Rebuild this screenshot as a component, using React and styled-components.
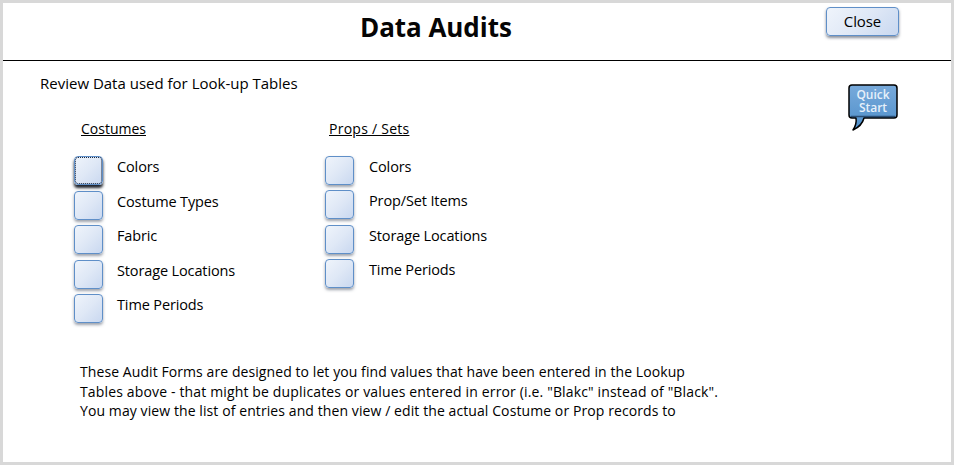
import React from "react";
import styled, { createGlobalStyle } from "styled-components";

const Global = createGlobalStyle`
  html, body { margin: 0; padding: 0; background: #fff; }
  body { width: 954px; height: 465px; overflow: hidden; font-family: "Open Sans", "Noto Sans", sans-serif; color: #000; }
  * { box-sizing: border-box; }
`;

const Frame = styled.div`
  width: 954px;
  height: 465px;
  border-style: solid;
  border-color: #d8d8d8;
  border-width: 3px;
  background: #fff;
  display: flex;
  flex-direction: column;
`;

const Header = styled.header`
  flex: none;
  height: 58px;
  border-bottom: 1px solid #000;
  display: flex;
  align-items: flex-start;
  padding: 4px 52px 0 357px;
`;

const Title = styled.h1`
  margin: 0;
  font-size: 26px;
  line-height: 40px;
  font-weight: 700;
  letter-spacing: -0.05px;
  color: #050505;
`;

const blueFace = `
  background: linear-gradient(135deg, #eff4fb 0%, #dfe8f6 50%, #c9d8f0 100%);
`;

const CloseButton = styled.button`
  margin-left: auto;
  width: 73px;
  height: 29px;
  padding: 0 0 1px;
  border: 1px solid #5f8fc8;
  border-radius: 4px;
  ${blueFace}
  box-shadow: 0 2px 3px rgba(60, 70, 90, 0.6);
  font-family: inherit;
  font-size: 15px;
  letter-spacing: -0.1px;
  color: #000;
`;

const Body = styled.main`
  flex: 1;
  display: flex;
  justify-content: space-between;
  align-items: flex-start;
  padding: 0 52px 0 37px;
`;

const Left = styled.div`
  display: flex;
  flex-direction: column;
`;

const Intro = styled.p`
  margin: 12px 0 0;
  font-size: 15px;
  line-height: 21px;
`;

const Columns = styled.div`
  display: flex;
  margin: 25px 0 0 34px;
`;

const Column = styled.section`
  width: ${(p) => p.$width}px;
  display: flex;
  flex-direction: column;
`;

const Heading = styled.h2`
  margin: 0 0 17px ${(p) => p.$indent}px;
  font-size: 14px;
  line-height: 20px;
  font-weight: 500;
  letter-spacing: ${(p) => p.$spacing}px;
  text-decoration: underline;
`;

const RowList = styled.div`
  display: flex;
  flex-direction: column;
  gap: ${(p) => p.$gap}px;
`;

const Row = styled.div`
  display: flex;
  align-items: flex-start;
  height: 29px;
`;

const Square = styled.button`
  flex: none;
  width: 29px;
  height: 29px;
  padding: 0;
  margin-right: ${(p) => p.$labelGap}px;
  border: 1px solid #5f8fc8;
  border-radius: 4px;
  ${blueFace}
  box-shadow: ${(p) =>
    p.$focused ? "0 3px 3px rgba(15, 20, 30, 0.95)" : "0 2px 3px rgba(60, 70, 90, 0.5)"};
  outline: ${(p) => (p.$focused ? "1px dotted #1a2a44" : "none")};
  outline-offset: -2px;
`;

const Label = styled.span`
  margin-top: 1px;
  font-size: 14.5px;
  line-height: 20px;
  letter-spacing: -0.13px;
  white-space: nowrap;
`;

const Note = styled.div`
  margin: 39px 0 0 40px;
  font-size: 14px;
  line-height: 19.5px;
  white-space: nowrap;
`;

const NoteLine = styled.p`
  margin: 0;
  letter-spacing: ${(p) => p.$spacing}px;
`;

const QuickWrap = styled.div`
  margin-top: 23px;
  line-height: 0;
`;

const QuickStart = () => (
  <svg width="51" height="48" viewBox="0 0 51 48">
    <defs>
      <linearGradient id="qs" x1="0" y1="0" x2="0" y2="1">
        <stop offset="0" stopColor="#78aadb" />
        <stop offset="1" stopColor="#4f8fca" />
      </linearGradient>
    </defs>
    <path
      d="M4 1H46Q49 1 49 4V31Q49 34 46 34H16Q14 42 5 46Q9 40 8 34H4Q1 34 1 31V4Q1 1 4 1Z"
      fill="url(#qs)"
      stroke="#000"
      strokeWidth="1.5"
      strokeLinejoin="round"
    />
    <path d="M3 32.5H47" stroke="#16304f" strokeWidth="1.5" opacity="0.7" />
    <text x="25" y="15" textAnchor="middle" fontFamily="'Open Sans', sans-serif" fontSize="12" fontWeight="600" fill="#e6f0fa">Quick</text>
    <text x="25" y="27.5" textAnchor="middle" fontFamily="'Open Sans', sans-serif" fontSize="12" fontWeight="600" fill="#e6f0fa">Start</text>
  </svg>
);

const costumes = ["Colors", "Costume Types", "Fabric", "Storage Locations", "Time Periods"];
const props = ["Colors", "Prop/Set Items", "Storage Locations", "Time Periods"];

export default function App() {
  return (
    <>
      <Global />
      <Frame>
        <Header>
          <Title>Data Audits</Title>
          <CloseButton>Close</CloseButton>
        </Header>
        <Body>
          <Left>
            <Intro>Review Data used for Look-up Tables</Intro>
            <Columns>
              <Column $width={251}>
                <Heading $indent={7} $spacing={0}>Costumes</Heading>
                <RowList $gap={5.5}>
                  {costumes.map((c, i) => (
                    <Row key={c}>
                      <Square $focused={i === 0} $labelGap={14} />
                      <Label>{c}</Label>
                    </Row>
                  ))}
                </RowList>
              </Column>
              <Column $width={200}>
                <Heading $indent={4} $spacing={0.25}>Props / Sets</Heading>
                <RowList $gap={5.4}>
                  {props.map((c) => (
                    <Row key={c}>
                      <Square $labelGap={15} />
                      <Label>{c}</Label>
                    </Row>
                  ))}
                </RowList>
              </Column>
            </Columns>
            <Note>
              <NoteLine $spacing={0.08}>These Audit Forms are designed to let you find values that have been entered in the Lookup</NoteLine>
              <NoteLine $spacing={0.15}>Tables above - that might be duplicates or values entered in error (i.e. "Blakc" instead of "Black".</NoteLine>
              <NoteLine $spacing={0.09}>You may view the list of entries and then view / edit the actual Costume or Prop records to</NoteLine>
            </Note>
          </Left>
          <QuickWrap>
            <QuickStart />
          </QuickWrap>
        </Body>
      </Frame>
    </>
  );
}
